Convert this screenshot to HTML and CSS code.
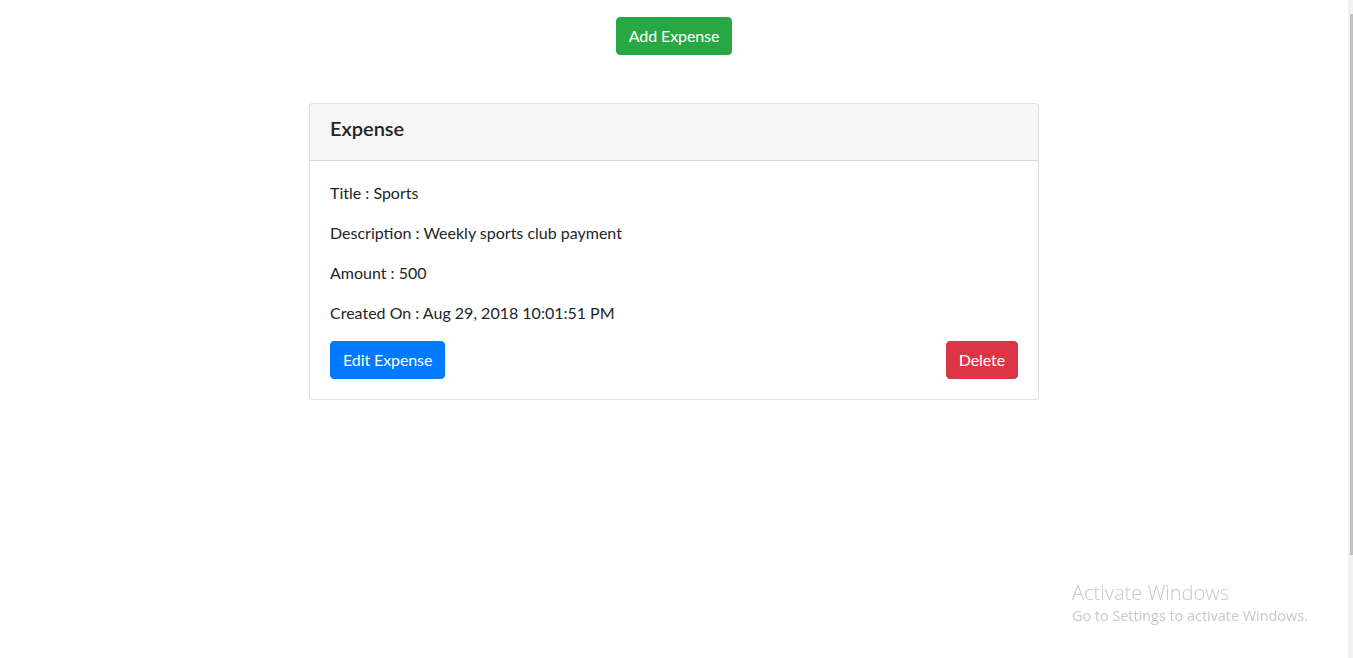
FILE: index.html
```html
<!DOCTYPE html>
<html lang="en">
<head>
<meta charset="utf-8">
<title>Expense</title>
<link rel="stylesheet" href="styles.css">
</head>
<body>
<main class="page">
  <div class="top-bar">
    <button class="btn btn-success">Add Expense</button>
  </div>
  <div class="container">
    <div class="card">
      <div class="card-header">
        <h5 class="card-title">Expense</h5>
      </div>
      <div class="card-body">
        <p>Title : Sports</p>
        <p>Description : Weekly sports club payment</p>
        <p>Amount : 500</p>
        <p>Created On : Aug 29, 2018 10:01:51 PM</p>
        <div class="actions">
          <button class="btn btn-primary">Edit Expense</button>
          <button class="btn btn-danger">Delete</button>
        </div>
      </div>
    </div>
  </div>
</main>
<aside class="scrollbar"><div class="thumb"></div></aside>
<div class="watermark">
  <div class="wm-title">Activate Windows</div>
  <div class="wm-sub">Go to Settings to activate Windows.</div>
</div>
</body>
</html>
```
FILE: styles.css
```css
* { box-sizing: border-box; }
html, body { margin: 0; height: 100%; }
body {
  display: flex;
  background: #fff;
  color: #212529;
  font-family: Lato, "Open Sans", sans-serif;
  font-size: 16px;
  line-height: 24px;
  overflow: hidden;
}
.page { flex: 1; min-width: 0; }
.top-bar {
  display: flex;
  justify-content: center;
  padding-top: 17px;
}
.container {
  width: 730px;
  margin: 48px auto 0;
}
.btn {
  font-family: inherit;
  font-size: 16px;
  line-height: 24px;
  padding: 6px 12px;
  border: 1px solid transparent;
  border-radius: 4px;
  color: #fff;
  cursor: pointer;
  letter-spacing: -0.1px;
}
.btn-success { background: #28a745; border-color: #28a745; }
.btn-primary { background: #007bff; border-color: #007bff; }
.btn-danger { background: #dc3545; border-color: #dc3545; }
.card {
  border: 1px solid rgba(0,0,0,.125);
  border-radius: 4px;
  background: #fff;
}
.card-header {
  background: rgba(0,0,0,.03);
  border-bottom: 1px solid rgba(0,0,0,.125);
  padding: 12px 20px;
}
.card-title {
  margin: 0 0 8px;
  font-size: 20px;
  line-height: 24px;
  font-weight: 600;
}
.card-body { padding: 20px; }
.card-body p { margin: 0 0 16px; }
.actions {
  display: flex;
  justify-content: space-between;
}
.scrollbar {
  width: 5px;
  height: 100vh;
  background: #f1f1f1;
  padding-top: 14px;
  padding-left: 2px;
  flex: none;
}
.thumb {
  width: 3px;
  height: 541px;
  background: #c1c1c1;
}
.watermark {
  position: fixed;
  left: 1072px;
  top: 580px;
  color: #c8c8c8;
  font-family: "Open Sans", sans-serif;
}
.wm-title { font-size: 20px; line-height: 26px; font-weight: 300; }
.wm-sub { font-size: 14.4px; line-height: 20px; }
```
